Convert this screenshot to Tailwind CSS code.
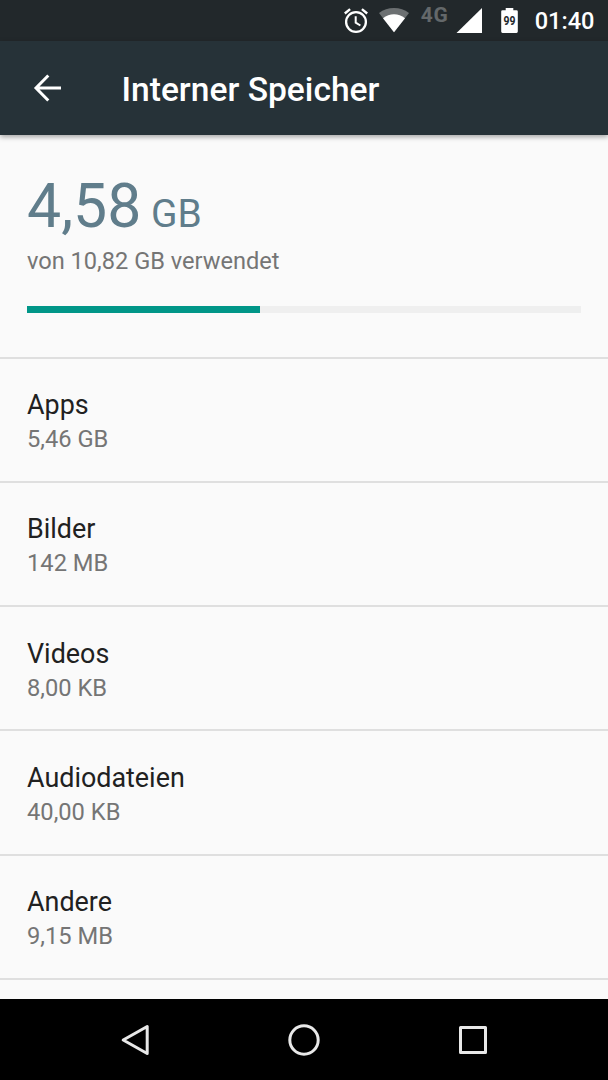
<!DOCTYPE html>
<html lang="de">
<head>
  <meta charset="UTF-8" />
  <title>Interner Speicher</title>
  <script src="https://cdn.jsdelivr.net/npm/@tailwindcss/browser@4"></script>
</head>
<body class="bg-[#fafafa] font-[Roboto,sans-serif]">
  <div class="w-[608px] h-[1080px] flex flex-col overflow-hidden">

    <!-- Statusleiste -->
    <div class="h-[41px] shrink-0 bg-[#22282b] flex items-start justify-end pr-[13.5px] text-white">
      <svg class="mt-2 w-[26px] h-[26px]" viewBox="0 0 26 26" fill="none" stroke="#fff">
        <circle cx="13" cy="14" r="9.9" stroke-width="2.3" />
        <path d="M12.7 8.2v6.4l4.7 2.9" stroke-width="2" />
        <path d="M1.8 5.5l5.3-4.4M24.2 5.5l-5.3-4.4" stroke-width="2.4" />
      </svg>
      <svg class="mt-2 ml-[10.5px] w-[30px] h-[25px]" viewBox="0 0 30 25">
        <path d="M0 5Q6.500 0 15 0T30 5L15 24.300z" fill="#6c7072" />
        <path d="M4 10.200Q9 6.300 15 6.300T26 10.200L15 24.300z" fill="#fff" />
      </svg>
      <span class="mt-[3px] ml-[11.5px] w-[35px] text-[21px] leading-6 font-bold tracking-[0.8px] text-[#64686a]">4G</span>
      <svg class="mt-2 w-[26px] h-[25px]" viewBox="0 0 26 25">
        <path d="M0.500 25L26 0v25z" fill="#fff" />
      </svg>
      <div class="relative mt-2 ml-[19.5px] w-[17px] h-[25px]">
        <svg class="w-[17px] h-[25px]" viewBox="0 0 17 25">
          <path d="M4.700 0h7.600v2.300H15.500q1.300 0 1.300 1.300v20q0 1.300-1.300 1.300h-14Q0.200 24.900 0.200 23.600v-20Q0.200 2.300 1.500 2.300H4.700z" fill="#fff" />
        </svg>
        <span class="absolute inset-x-0 top-[5px] flex justify-center text-[13px] leading-4 font-bold scale-x-[0.8] text-[#22282b]">99</span>
      </div>
      <span class="mt-[7px] ml-[16.500px] text-[23.600px] leading-7 font-medium">01:40</span>
    </div>

    <!-- Kopfzeile -->
    <div class="relative h-[94px] shrink-0 bg-[#263238] shadow-[0_2px_5px_rgba(0,0,0,0.35)] flex items-center text-white">
      <svg class="ml-[32.5px] mb-px w-[29px] h-7" viewBox="0 0 29 28" fill="none" stroke="#fff" stroke-width="3">
        <path d="M15.300 1.500L3 14l12.300 12.500M2.500 14H28" />
      </svg>
      <h1 class="ml-[60px] mt-1 text-[33.600px] leading-10 font-medium">Interner Speicher</h1>
    </div>

    <!-- Zusammenfassung -->
    <div class="shrink-0 h-[223.500px] pt-9 px-[27px] border-b-2 border-[#dfdfdf]">
      <div class="h-[72px] text-[60.750px] leading-[72px] text-[#607d8b]">4,58<span class="text-[38.900px] leading-none"> GB</span></div>
      <div class="mt-1 text-[23.600px] leading-7 text-[#757575]">von 10,82 GB verwendet</div>
      <div class="mt-[31px] h-[7px] bg-[#efefef]">
        <div class="h-full bg-[#009688]" style="width: 42.1%"></div>
      </div>
    </div>

    <!-- Kategorien -->
    <div class="flex-1 min-h-0 overflow-hidden">
      <div class="h-[124.250px] pt-[30.500px] px-[27px] border-b-2 border-[#dfdfdf]">
        <div class="text-[26.900px] leading-8 text-[#212121]">Apps</div>
        <div class="mt-1 text-[23.700px] leading-7 text-[#757575]">5,46 GB</div>
      </div>
      <div class="h-[124.250px] pt-[30.500px] px-[27px] border-b-2 border-[#dfdfdf]">
        <div class="text-[26.900px] leading-8 text-[#212121]">Bilder</div>
        <div class="mt-1 text-[23.700px] leading-7 text-[#757575]">142 MB</div>
      </div>
      <div class="h-[124.250px] pt-[30.500px] px-[27px] border-b-2 border-[#dfdfdf]">
        <div class="text-[26.900px] leading-8 text-[#212121]">Videos</div>
        <div class="mt-1 text-[23.700px] leading-7 text-[#757575]">8,00 KB</div>
      </div>
      <div class="h-[124.250px] pt-[30.500px] px-[27px] border-b-2 border-[#dfdfdf]">
        <div class="text-[26.900px] leading-8 text-[#212121]">Audiodateien</div>
        <div class="mt-1 text-[23.700px] leading-7 text-[#757575]">40,00 KB</div>
      </div>
      <div class="h-[124.250px] pt-[30.500px] px-[27px] border-b-2 border-[#dfdfdf]">
        <div class="text-[26.900px] leading-8 text-[#212121]">Andere</div>
        <div class="mt-1 text-[23.700px] leading-7 text-[#757575]">9,15 MB</div>
      </div>
    </div>

    <!-- Navigationsleiste -->
    <div class="h-[81px] shrink-0 bg-black flex items-center justify-center gap-[137px]">
      <svg class="w-8 h-8" viewBox="0 0 32 32" fill="none" stroke="#e8e8e8" stroke-width="3" stroke-linejoin="round">
        <path d="M28.200 2.500v27L4.200 16z" />
      </svg>
      <svg class="w-8 h-8" viewBox="0 0 32 32" fill="none" stroke="#e8e8e8" stroke-width="3">
        <circle cx="16" cy="16" r="14.200" />
      </svg>
      <svg class="w-8 h-8" viewBox="0 0 32 32" fill="none" stroke="#e8e8e8" stroke-width="3" stroke-linejoin="round">
        <rect x="3.500" y="3.500" width="25" height="25" />
      </svg>
    </div>
  </div>
</body>
</html>
